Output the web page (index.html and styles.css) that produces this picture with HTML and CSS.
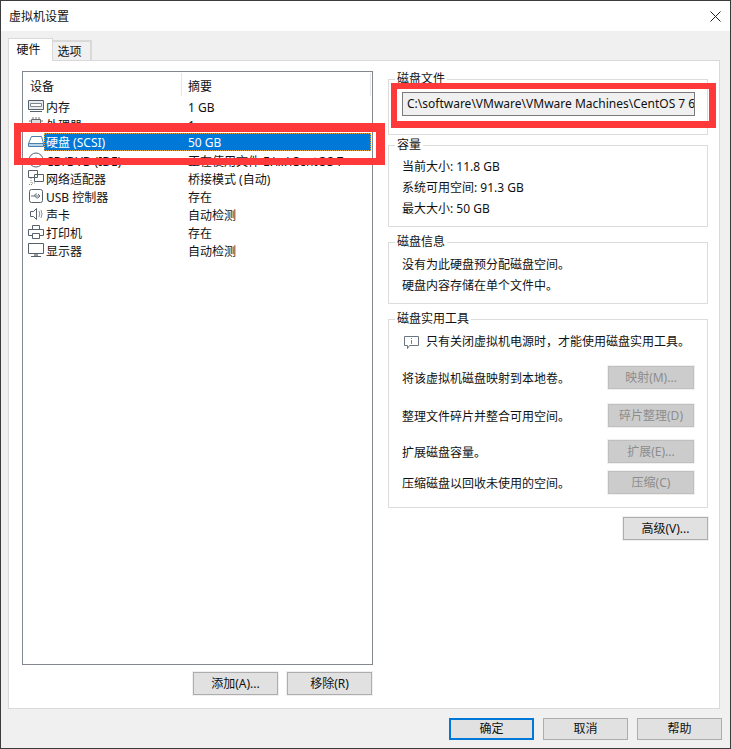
FILE: index.html
```html
<!DOCTYPE html>
<html lang="zh-CN">
<head>
<meta charset="utf-8">
<title>虚拟机设置</title>
<link rel="stylesheet" href="styles.css">
</head>
<body>
<div class="window">
  <header class="titlebar">
    <span>虚拟机设置</span>
    <svg class="close" width="11" height="11" viewBox="0 0 11 11"><path d="M.5.500l10 10M10.500.500l-10 10" stroke="#222" stroke-width="1" fill="none"/></svg>
  </header>
  <div class="body">
    <nav class="tabs">
      <div class="tab active">硬件</div>
      <div class="tab">选项</div>
    </nav>
    <section class="panel">
      <div class="left">
        <div class="list">
          <div class="row head"><span class="c1 hc">设备</span><span class="c2 hc">摘要</span></div>
          <div class="row"><span class="ico"><svg width="16" height="16" viewBox="0 0 16 16"><path d="M.5 2.500h15v9H.5z" fill="#e8ecef" stroke="#56616b"/><path d="M2.500 5.500h11v3h-11z" fill="#fff" stroke="#7c8790"/><path d="M2 13.500h12" stroke="#56616b"/></svg></span><span class="c1n">内存</span><span class="c2">1 GB</span></div>
          <div class="row"><span class="ico"><svg width="16" height="16" viewBox="0 0 16 16"><path d="M5 1v14M8 1v14M11 1v14M1 5h14M1 8h14M1 11h14" stroke="#777"/><path d="M3.500 3.500h9v9h-9z" fill="#ddd" stroke="#666"/></svg></span><span class="c1n">处理器</span><span class="c2">1</span></div>
          <div class="row sel"><span class="ico"><svg width="16" height="16" viewBox="0 0 16 16"><path d="M3.500 2.500h10l2 7v3H.5v-3z" fill="#fff" stroke="#4f7fa8"/><path d="M.5 9.500h15" stroke="#4f7fa8"/><path d="M1 10h14v2H1z" fill="#b9d3ea"/></svg></span><span class="sel-text"><span class="sel-a">硬盘 (SCSI)</span><span>50 GB</span></span></div>
          <div class="row"><span class="ico"><svg width="16" height="16" viewBox="0 0 16 16"><circle cx="8" cy="8" r="7" fill="#fff" stroke="#5a6570"/><circle cx="8" cy="8" r="2" fill="none" stroke="#5a6570"/></svg></span><span class="c1n">CD/DVD (IDE)</span><span class="c2">正在使用文件 E:\...\CentOS 7</span></div>
          <div class="row"><span class="ico"><svg width="16" height="16" viewBox="0 0 16 16"><path d="M3 8v5h4M1 14.500h3" fill="none" stroke="#888" stroke-dasharray="1 1"/><path d="M.5.500h9v7h-9zM6.500 4.500h9v7h-9z" fill="#fff" stroke="#56616b"/></svg></span><span class="c1n">网络适配器</span><span class="c2">桥接模式 (自动)</span></div>
          <div class="row"><span class="ico"><svg width="16" height="16" viewBox="0 0 16 16"><rect x="1.500" y="1.500" width="13" height="13" rx="2" fill="#fff" stroke="#56616b"/><path d="M3 8h9M10 6l2 2-2 2M6 8l1.500-2H9M7 8l1.500 2H10" fill="none" stroke="#6a7580"/></svg></span><span class="c1n">USB 控制器</span><span class="c2">存在</span></div>
          <div class="row"><span class="ico"><svg width="16" height="16" viewBox="0 0 16 16"><path d="M2.500 5.500h3l3-3v11l-3-3h-3z" fill="#fff" stroke="#56616b"/><path d="M11 5q1.500 3 0 6M13 4q2 4 0 8" fill="none" stroke="#8a949c"/></svg></span><span class="c1n">声卡</span><span class="c2">自动检测</span></div>
          <div class="row"><span class="ico"><svg width="16" height="16" viewBox="0 0 16 16"><path d="M.5 5.500h15v6h-15z" fill="#fff" stroke="#56616b"/><path d="M4.500 1.500h7v4h-7zM4.500 9.500h7v5h-7z" fill="#fff" stroke="#56616b"/></svg></span><span class="c1n">打印机</span><span class="c2">存在</span></div>
          <div class="row"><span class="ico"><svg width="16" height="16" viewBox="0 0 16 16"><path d="M.5 1.500h15v10H.5z" fill="#fff" stroke="#56616b"/><path d="M3 14.500h10" stroke="#56616b"/><path d="M6 12h4v2H6z" fill="#999"/></svg></span><span class="c1n">显示器</span><span class="c2">自动检测</span></div>
        </div>
        <div class="list-actions">
          <button class="btn">添加(A)...</button>
          <button class="btn">移除(R)</button>
        </div>
      </div>
      <div class="right">
        <fieldset class="group g-file"><legend>磁盘文件</legend><div class="path">C:\software\VMware\VMware Machines\CentOS 7 6</div></fieldset>
        <fieldset class="group g-cap"><legend>容量</legend><p>当前大小: 11.8 GB</p><p>系统可用空间: 91.3 GB</p><p>最大大小: 50 GB</p></fieldset>
        <fieldset class="group g-info"><legend>磁盘信息</legend><p>没有为此硬盘预分配磁盘空间。</p><p>硬盘内容存储在单个文件中。</p></fieldset>
        <fieldset class="group g-util"><legend>磁盘实用工具</legend>
          <div class="note"><svg width="15" height="15" viewBox="0 0 15 15"><path d="M.5 1.500h14v9H5.500l-2 3v-3h-3z" fill="#fff" stroke="#6b7680"/><path d="M7.500 3v1M7.500 5v4" stroke="#4a90c8"/></svg><span>只有关闭虚拟机电源时，才能使用磁盘实用工具。</span></div>
          <div class="util u1"><span>将该虚拟机磁盘映射到本地卷。</span><button class="btn dis">映射(M)...</button></div>
          <div class="util u2"><span>整理文件碎片并整合可用空间。</span><button class="btn dis">碎片整理(D)</button></div>
          <div class="util u3"><span>扩展磁盘容量。</span><button class="btn dis">扩展(E)...</button></div>
          <div class="util u4"><span>压缩磁盘以回收未使用的空间。</span><button class="btn dis">压缩(C)</button></div>
        </fieldset>
        <div class="adv"><button class="btn">高级(V)...</button></div>
      </div>
    </section>
    <footer class="footer">
      <button class="btn primary">确定</button>
      <button class="btn">取消</button>
      <button class="btn">帮助</button>
    </footer>
  </div>
  <div class="mark m1"></div>
  <div class="mark m2"></div>
</div>
</body>
</html>
```
FILE: styles.css
```css
* { box-sizing: border-box; }
html, body { margin: 0; padding: 0; }
body { width: 731px; height: 749px; overflow: hidden; background: #f0f0f0; font: 12px/18px "Noto Sans", "Noto Sans CJK SC", sans-serif; color: #111; }
.window { position: relative; width: 731px; height: 749px; border: 1px solid #3c3c3c; background: #f0f0f0; display: flex; flex-direction: column; }
.titlebar { height: 30px; flex: none; background: #fff; display: flex; align-items: center; justify-content: space-between; padding: 1px 9px 0 8px; }
.body { flex: 1; display: flex; flex-direction: column; padding: 7px 10px 0 7px; min-height: 0; }
.tabs { display: flex; height: 22px; align-items: flex-end; position: relative; z-index: 1; flex: none; }
.tab { width: 39px; height: 20px; text-align: center; border: 2px solid #d9d9d9; border-width: 2px 2px 0 0; background: #f0f0f0; line-height: 20px; padding-right: 4px; }
.tab.active { width: 45px; height: 23px; background: #fff; border: 1px solid #d9d9d9; border-bottom: 0; margin-bottom: -1px; line-height: 22px; }
.panel { height: 649px; flex: none; background: #fff; border: 1px solid #d9d9d9; padding: 10px 11px 0 13px; display: flex; gap: 15px; }
.left { width: 351px; flex: none; display: flex; flex-direction: column; }
.list { height: 594px; border: 1px solid #828790; padding: 1px; flex: none; overflow: hidden; }
.row { display: flex; height: 18px; align-items: center; white-space: nowrap; overflow: hidden; }
.row.head { height: 23px; margin-bottom: 1px; }
.hc { padding-left: 6px; }
.c1 { width: 158px; height: 23px; line-height: 27px; border-right: 1px solid #e5e5e5; }
.head .c2 { flex: 1; height: 23px; line-height: 27px; border-right: 1px solid #e5e5e5; }
.ico { width: 16px; height: 16px; margin-left: 4px; flex: none; display: flex; }
.c1n { width: 144px; flex: none; padding: 4px 0 0 2px; }
.row > .c2:not(.hc) { padding-top: 4px; }
.row.sel { overflow: visible; }
.sel-text { flex: 1; display: flex; background: #0078d7; color: #fff; outline: 1px dotted #e8a33d; outline-offset: -1px; height: 18px; padding-left: 2px; line-height: 20px; }
.sel-a { width: 142px; flex: none; }
.list-actions { display: flex; justify-content: flex-end; gap: 9px; margin: 7px 1px 0 0; }
.btn { font: inherit; color: #111; width: 85px; height: 23px; background: #e1e1e1; border: 1px solid #adadad; padding: 0; box-shadow: 0 0 0 1px #f0f0f0; }
.right { width: 320px; flex: none; display: flex; flex-direction: column; }
.group { margin: 0; border: 1px solid #dcdcdc; padding: 0; position: relative; flex: none; min-width: 0; }
.group legend { margin-left: 6px; padding: 0 2px; line-height: 14px; height: 14px; }
.group p { margin: 0; padding-left: 13px; }
.g-file { height: 63px; margin-top: 1px; }
.path { margin: 6px 0 0 13px; width: 293px; height: 24px; border: 1px solid #7a7a7a; background: #f0f0f0; padding: 2px 4px; white-space: nowrap; overflow: hidden; }
.g-cap { height: 89px; margin-top: 3px; }
.g-cap p { height: 21px; line-height: 21px; }
.g-cap p:first-of-type { margin-top: 4px; }
.g-info { height: 69px; margin-top: 8px; }
.g-info p { height: 21px; line-height: 21px; }
.g-info p:first-of-type { margin-top: 5px; }
.g-util { height: 196px; margin-top: 8px; }
.note { display: flex; gap: 7px; align-items: center; padding-left: 15px; height: 18px; margin-top: 7px; }
.util { display: flex; justify-content: space-between; align-items: center; padding: 0 13px 0 13px; height: 23px; }
.util > span { padding-top: 2px; }
.u1 { margin-top: 15px; }
.u2 { margin-top: 15px; }
.u3 { margin-top: 13px; }
.u4 { margin-top: 8px; }
.dis { width: 86px; background: #cccccc; border-color: #bfbfbf; color: #8d8d8d; }
.adv { display: flex; justify-content: flex-end; margin-top: 9px; }
.footer { display: flex; justify-content: flex-end; gap: 9px; margin: 9px -2px 0 0; }
.primary { border: 2px solid #0078d7; }
.footer .btn { width: 85px; height: 22px; }
.mark { position: absolute; border: 0 solid #ff3939; }
.m1 { left: 13px; top: 122px; width: 371px; height: 42px; border-width: 9px 9px 7px 7px; }
.m2 { left: 390px; top: 82px; width: 325px; height: 45px; border-width: 6px 7px 7px 6px; }
```
